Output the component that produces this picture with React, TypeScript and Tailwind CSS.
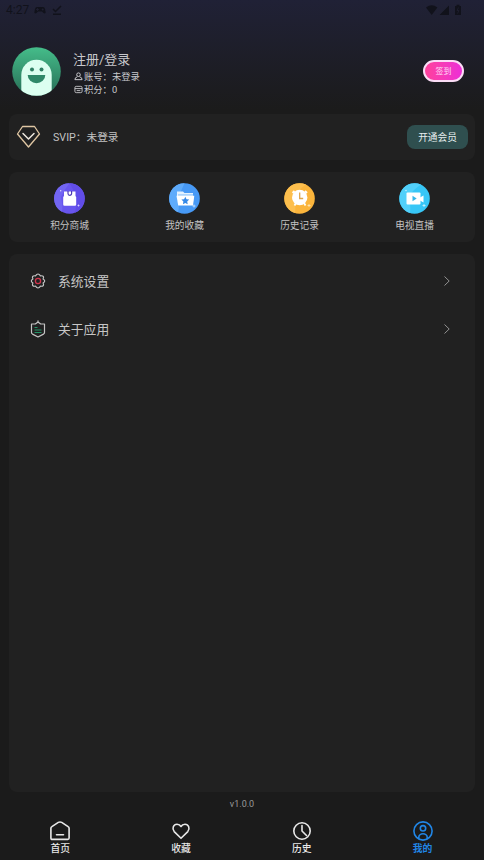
import type { ReactNode } from 'react';

interface Shortcut {
  label: string;
  icon: ReactNode;
}

interface NavItem {
  label: string;
  active?: boolean;
  icon: ReactNode;
}

const shortcuts: Shortcut[] = [
  {
    label: '积分商城',
    icon: (
      <svg viewBox="0 0 31 31" className="w-[31px] h-[31px]">
        <circle cx="15.5" cy="15.5" r="15.3" fill="#6855ee" />
        <path d="M2 8A15.3 15.3 0 0 1 15.5.2Q10 7 7 14Q9 23 8 28.8A15.3 15.3 0 0 1 2 8Z" fill="#7265f2" />
        <path d="M15.5.2A15.3 15.3 0 0 1 21 29.7Q25 14 15.5.2Z" fill="#614de8" />
        <path d="M10 8.500h11.500V13l.7 1v7.500q0 1.300-1.300 1.300H10.500q-1.300 0-1.300-1.300V14l.8-1z" fill="#fff" />
        <path d="M14 8v2.500a1.800 1.800 0 0 0 3.600 0V8" fill="none" stroke="#4c3ab5" strokeWidth="1.200" />
        <circle cx="6.700" cy="7.700" r=".7" fill="#ddd8ff" />
        <path d="M24.500 21.500v2M23.500 22.500h2" stroke="#ddd8ff" strokeWidth=".8" />
      </svg>
    ),
  },
  {
    label: '我的收藏',
    icon: (
      <svg viewBox="0 0 31 31" className="w-[31px] h-[31px]">
        <circle cx="15.5" cy="15.5" r="15.3" fill="#4799f5" />
        <path d="M2 8A15.3 15.3 0 0 1 15.5.2Q12 9 8 15Q11 23 9 29.3A15.3 15.3 0 0 1 2 8Z" fill="#5eabfb" />
        <path d="M8 8.500h6l1.500 1.500h8.500v3.500H8z" fill="#e4f2ff" />
        <path d="M9 12h15" stroke="#5ba8f6" strokeWidth=".8" />
        <path d="M7.500 12.700h17.800L24 22.500H9.200z" fill="#fff" />
        <path d="m16.300 13.700 1.200 2.500 2.700.4-2 1.900.5 2.700-2.400-1.300-2.400 1.300.5-2.700-2-1.900 2.700-.4z" fill="#3589e8" />
        <path d="M25 21.500v3M23.500 23h3" stroke="#d4e9ff" strokeWidth=".8" />
      </svg>
    ),
  },
  {
    label: '历史记录',
    icon: (
      <svg viewBox="0 0 31 31" className="w-[31px] h-[31px]">
        <circle cx="15.5" cy="15.5" r="15.3" fill="#fbb53c" />
        <path d="M3 7A15.3 15.3 0 0 1 22 1.600Q14 7 10 13Q12 23 11 30A15.3 15.3 0 0 1 3 7Z" fill="#fdbf4e" />
        <path d="m12 20-1.500 2.500M20 20l1.500 2.500M8.500 10l2-2M23 10l-2-2" stroke="#fff" strokeWidth="1.800" />
        <circle cx="15.700" cy="14.500" r="7.700" fill="#fff" />
        <path d="M15.700 9.500v6h3.500" fill="none" stroke="#dfa64d" strokeWidth="1.300" />
        <path d="M25 21v3M23.500 22.500h3" stroke="#ffe8bb" strokeWidth=".8" />
      </svg>
    ),
  },
  {
    label: '电视直播',
    icon: (
      <svg viewBox="0 0 31 31" className="w-[31px] h-[31px]">
        <circle cx="15.5" cy="15.5" r="15.3" fill="#37c6f6" />
        <path d="M3 7A15.3 15.3 0 0 1 22 1.600Q14 7 10 13Q12 23 11 30A15.3 15.3 0 0 1 3 7Z" fill="#52d0fa" />
        <rect x="7.500" y="9.500" width="14" height="12" rx="1" fill="#fff" />
        <path d="m21 14.500 3.500-2v7L21 17.500z" fill="#fff" />
        <path d="m13.500 12.800 4.200 2.700-4.200 2.700z" fill="#36b6e8" />
        <circle cx="7" cy="7.500" r=".7" fill="#d3f5ff" />
        <path d="M25 21v3M23.500 22.500h3" stroke="#d3f5ff" strokeWidth=".8" />
      </svg>
    ),
  },
];

const navItems: NavItem[] = [
  {
    label: '首页',
    icon: <path d="M.9 7.200q0-1 1-1.600L8.300 1.400q1.700-.9 3.400 0l6.400 4.200q1 .6 1 1.600v9.900q0 1.300-1.300 1.300H2.200Q.9 18.400.9 17.100zM6.500 13.700h7" />,
  },
  {
    label: '收藏',
    icon: <path d="M10 17.300 3.200 10.600C.6 7.500 2.500 3.200 6 3.200c2 0 3.300 1 4 2.300.7-1.300 2-2.300 4-2.300 3.500 0 5.400 4.300 2.800 7.400z" />,
  },
  {
    label: '历史',
    icon: (
      <>
        <circle cx="10" cy="10" r="8.200" />
        <path d="M10 4.500V10l4.500 4.500" />
      </>
    ),
  },
  {
    label: '我的',
    active: true,
    icon: (
      <>
        <circle cx="10" cy="10" r="9.100" />
        <circle cx="10" cy="7.300" r="2.700" />
        <path d="M5.800 17.500v-1.300a4.200 3.400 0 0 1 8.400 0v1.300" />
      </>
    ),
  },
];

function StatusBar() {
  return (
    <div className="flex h-5 items-center pl-1.5 pr-[22px] text-[#11121b]">
      <span className="font-['Roboto'] text-[12px] leading-none">4:27</span>
      <svg viewBox="0 0 12 10" className="ml-[5px] w-3 h-2.5" fill="currentColor">
        <path d="M3 2h6q1.500 0 2 2l.7 3.500Q11 9 9.500 8L8 6.500H4L2.500 8Q1 9 .3 7.500L1 4q.5-2 2-2z" />
        <path d="M3.500 3v3M2 4.500h3" stroke="#1f2031" strokeWidth=".8" />
        <circle cx="8.700" cy="4.500" r="1" fill="#1f2031" />
      </svg>
      <svg viewBox="0 0 10 10" className="ml-1.5 w-2.5 h-2.5" fill="none" stroke="currentColor" strokeWidth="1.500">
        <path d="m1 4 2.500 2.500L9 1M1 9.200h8" />
      </svg>
      <svg viewBox="0 0 36 12" className="ml-auto w-9 h-3" fill="currentColor">
        <path d="M0 3.500q5.700-4.500 11.400 0L5.700 11z" />
        <path d="M23 1.500V11h-9.500z" />
        <path d="M29 2h1.500V.8h3V2H35v9h-6z" />
        <path d="m32.500 3.500-1.500 3h2l-1.500 3" fill="none" stroke="#1f2031" strokeWidth=".8" />
      </svg>
    </div>
  );
}

function Profile() {
  return (
    <div className="flex h-[94px] pl-3 pr-5 pt-[27px]">
      <svg viewBox="0 0 49 49" className="w-[49px] h-[49px] shrink-0">
        <defs>
          <linearGradient id="avatar" x1="0" y1="0" x2="0" y2="1">
            <stop offset="0" stopColor="#45bd8a" />
            <stop offset="1" stopColor="#276d56" />
          </linearGradient>
          <clipPath id="avatarClip">
            <circle cx="24.500" cy="24.500" r="24.300" />
          </clipPath>
        </defs>
        <g clipPath="url(#avatarClip)">
          <rect width="49" height="49" fill="url(#avatar)" />
          <path d="M9.300 49V28a15.200 15.200 0 0 1 30.400 0v21z" fill="#dcfff0" />
          <circle cx="20" cy="22.500" r="2" fill="#2f7f63" />
          <circle cx="29.500" cy="22.500" r="2" fill="#2f7f63" />
          <path d="M15.700 28h17.600a8.800 8.300 0 0 1-17.600 0z" fill="#2f8868" />
        </g>
      </svg>
      <div className="ml-3 flex flex-col pt-[3px] text-[#c8c8cc]">
        <span className="text-[13px] leading-5">注册/登录</span>
        <div className="flex h-[13px] items-center text-[9.3px] leading-[13px]">
          <svg viewBox="0 0 10 10" className="mx-px w-[9px] h-[9px]" fill="none" stroke="currentColor" strokeWidth="1.100">
            <circle cx="5" cy="3" r="2" />
            <path d="M3.700 5.300Q1 6 1 8.500h8Q9 6 6.300 5.300" />
          </svg>
          账号：未登录
        </div>
        <div className="flex h-[13px] items-center text-[9.3px] leading-[13px]">
          <svg viewBox="0 0 10 10" className="mx-px w-[9px] h-[9px]" fill="none" stroke="currentColor">
            <rect x="1" y="1.500" width="8" height="7" rx="1.500" />
            <path d="M1 4h8M3 6.200h4" />
          </svg>
          积分：0
        </div>
      </div>
      <button className="ml-auto mt-[13px] flex h-[22px] w-[41px] items-center justify-center rounded-full border-2 border-[#fbdcf6] bg-linear-to-r from-[#ff409b] to-[#ed2dd7] pt-px text-[8px] leading-none text-[#ffd9f4]">
        签到
      </button>
    </div>
  );
}

function MenuRow({ label, icon }: Shortcut) {
  return (
    <div className="flex h-12 items-center pl-[21px] pr-[25px]">
      {icon}
      <span className="ml-3 pt-0.5 text-[12.8px] leading-5 text-[#c6c6c6]">{label}</span>
      <svg viewBox="0 0 6 10" className="ml-auto w-1.5 h-2.5" fill="none" stroke="#929292">
        <path d="m.5.5 4.700 4.500-4.700 4.500" />
      </svg>
    </div>
  );
}

export default function App() {
  return (
    <div className="flex h-[860px] w-[484px] flex-col overflow-hidden bg-[#1b1b1b] bg-[linear-gradient(to_bottom,#202136_0px,#1b1b1b_110px)] font-['Roboto','Noto_Sans_CJK_SC',sans-serif]">
      <StatusBar />
      <Profile />

      <div className="mx-[9px] flex h-[46px] shrink-0 items-center rounded-lg bg-[#212121] px-[7px]">
        <svg viewBox="0 0 25 24" className="w-[25px] h-6" fill="none" strokeLinejoin="round">
          <path d="M6.500 1.500h12L23.500 9 12.500 22 1.500 9z" stroke="#dfc6a3" strokeWidth="1.300" />
          <path d="m7 8.500 5.500 5.500L18 8.500" stroke="#eee8df" strokeWidth="1.500" strokeLinecap="round" />
        </svg>
        <span className="ml-3 pt-0.5 text-[10.7px] leading-4 text-[#c3c3c3]">SVIP：未登录</span>
        <button className="ml-auto h-6 w-[61px] rounded-lg bg-[#2f4f4f] pt-px text-[9.7px] leading-[23px] text-[#e8efef]">
          开通会员
        </button>
      </div>

      <div className="mx-[9px] mt-3 grid h-[70px] shrink-0 grid-cols-4 rounded-lg bg-[#212121] px-[3px] pt-[11px]">
        {shortcuts.map(item => (
          <div key={item.label} className="flex flex-col items-center">
            {item.icon}
            <span className="mt-[5px] text-[9.7px] leading-[14px] text-[#c3c3c3]">{item.label}</span>
          </div>
        ))}
      </div>

      <div className="mx-[9px] mt-3 h-[538px] shrink-0 rounded-lg bg-[#212121] pt-[3px]">
        <MenuRow
          label="系统设置"
          icon={
            <svg viewBox="0 0 16 16" className="w-4 h-4" fill="none" strokeLinejoin="round">
              <path d="M5.500 2.800Q8-.8 10.500 2.800q4.300-.4 2.600 3.200 3.200 2 0 4 1.700 3.600-2.600 3.200Q8 16.800 5.500 13.200 1.200 13.600 2.900 10-.3 8 2.900 6 1.200 2.400 5.500 2.800z" stroke="#c4c4c4" strokeWidth="1.200" />
              <circle cx="8" cy="8" r="2.600" stroke="#cf364d" strokeWidth="1.300" />
            </svg>
          }
        />
        <MenuRow
          label="关于应用"
          icon={
            <svg viewBox="0 0 16 18" className="w-4 h-[18px]" fill="none" strokeLinejoin="round">
              <path d="M1.500 4h3.800L8 2l2.700 2h3.800v8.500q0 1-1 1.600L8 17l-5.500-2.900q-1-.6-1-1.600z" stroke="#c4c4c4" strokeWidth="1.200" />
              <path d="M8 .3V3" stroke="#c4c4c4" />
              <path d="M4.500 7.500h3M4.500 10h7M4.500 12.500h7" stroke="#249467" strokeWidth="1.200" />
            </svg>
          }
        />
      </div>

      <div className="h-6 shrink-0 text-center text-[9px] leading-6 text-[#999]">v1.0.0</div>

      <nav className="mr-px grid h-11 shrink-0 grid-cols-4">
        {navItems.map(item => (
          <div
            key={item.label}
            className={`flex flex-col items-center pt-[5px] ${item.active ? 'font-bold text-[#2186e6]' : 'font-medium text-[#e8e8e8]'}`}
          >
            <svg viewBox="0 0 20 20" className="w-5 h-5" fill="none" stroke="currentColor" strokeWidth="1.600" strokeLinecap="round" strokeLinejoin="round">
              {item.icon}
            </svg>
            <span className="mt-px text-[9.8px] leading-[14px]">{item.label}</span>
          </div>
        ))}
      </nav>
    </div>
  );
}
